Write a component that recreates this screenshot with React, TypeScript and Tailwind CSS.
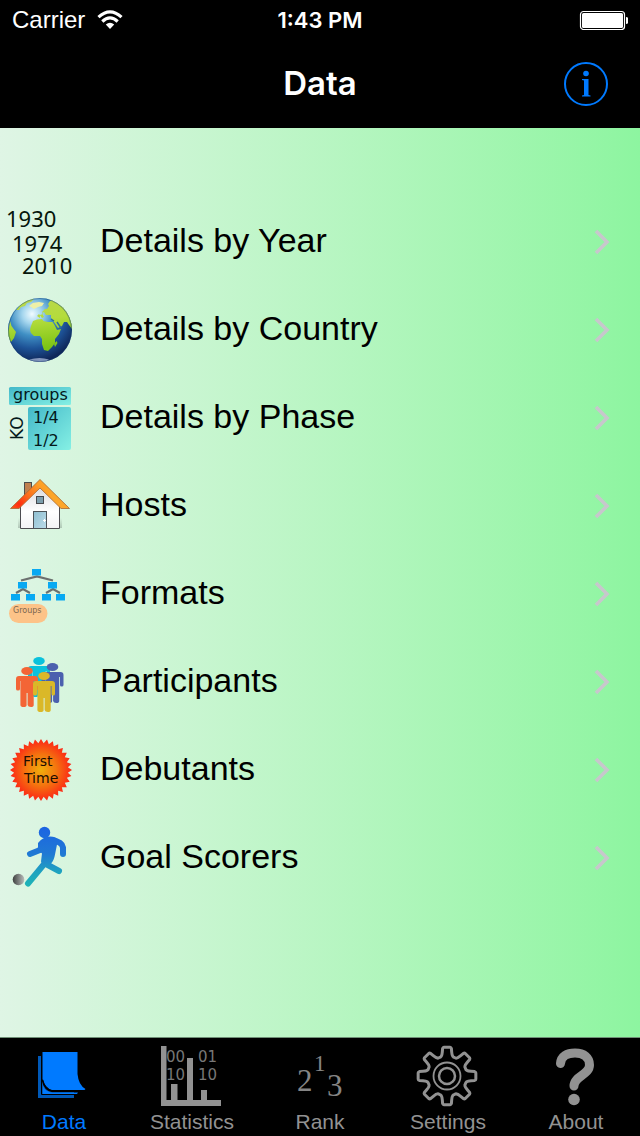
import type { ReactNode } from "react";

const polar = (cx: number, cy: number, r: number, deg: number) => {
  const a = (deg * Math.PI) / 180;
  return `${(cx + r * Math.sin(a)).toFixed(2)} ${(cy - r * Math.cos(a)).toFixed(2)}`;
};

const burst = Array.from({ length: 64 }, (_, i) =>
  polar(41, 46, i % 2 === 0 ? 31 : 27, i * 5.625),
).join(" L");

const gear =
  "M" +
  Array.from({ length: 8 }, (_, i) => {
    const d = i * 45;
    const p = (r: number, a: number) => polar(31, 32, r, d + a);
    return `${p(28, -9)} Q${p(29, -8)} ${p(29, -6)} L${p(29, 6)} Q${p(29, 8)} ${p(28, 9)} L${p(24.5, 11)} C${p(20.5, 14)} ${p(19.5, 18)} ${p(20, 22.5)} C${p(19.5, 27)} ${p(20.5, 31)} ${p(24.5, 34)} L`;
  }).join("") +
  polar(31, 32, 28, -9) +
  "Z";

function RowIcon({ children }: { children: ReactNode }) {
  return (
    <svg viewBox="0 0 80 88" className="h-22 w-20 shrink-0" aria-hidden="true">
      {children}
    </svg>
  );
}

function YearIcon() {
  return (
    <RowIcon>
      <g className="font-['Noto_Sans',sans-serif] text-[22px]" fill="#06160b">
        <text x="6" y="31">1930</text>
        <text x="12" y="56">1974</text>
        <text x="22" y="78">2010</text>
      </g>
    </RowIcon>
  );
}

function GlobeIcon() {
  return (
    <RowIcon>
      <defs>
        <radialGradient id="sea" gradientUnits="userSpaceOnUse" cx="32" cy="30" r="48">
          <stop offset="0" stopColor="#f0fbff" />
          <stop offset="0.2" stopColor="#a5d6ee" />
          <stop offset="0.45" stopColor="#3f8fc4" />
          <stop offset="0.72" stopColor="#1d5296" />
          <stop offset="1" stopColor="#0f2658" />
        </radialGradient>
        <linearGradient id="land" gradientUnits="userSpaceOnUse" x1="40" y1="16" x2="46" y2="64">
          <stop offset="0" stopColor="#b9d84a" />
          <stop offset="0.4" stopColor="#b4dc3c" />
          <stop offset="1" stopColor="#7cc414" />
        </linearGradient>
        <clipPath id="globe">
          <circle cx="40" cy="46" r="32" />
        </clipPath>
      </defs>
      <circle cx="40" cy="46" r="32" fill="url(#sea)" />
      <g clipPath="url(#globe)" fill="url(#land)">
        <path d="M33 37l4-1.500 5-.5 1.500 2 4 1 5 0 2 3 2.500 5 4-1-2 5-4 5 0 4-3 4-4 4-4-1-2-6 0-5-2-3-6 0-3-3-1-3 1-4z" />
        <path d="M40 34l0-3 3-1-1-2 3-3 2 0 2-3-1-2 2-3 5-3 6 3 8 7 4 9 1 8-2 4-3-4-2-3-3 0-2 4-4 2-4-6-3-4 0-3-5 0-2-3-2 1 2 4-2 1-3-4-2 2z" />
        <path d="M29 22l4-3 6-1 5 1-2 3-4 1-4 2-3-2z" fill="#eef0a8" />
        <path d="M16 26l5-6 6-4 7-1-3 3-4 1-2 3-4 1-2 3z" />
        <path d="M10 37l1.500 5 4.500 6-2 6-3 4-4-5z" />
        <path d="M54 60l2.500-3 1 2-2.500 4z" />
        <path d="M29 75.500q11-3 20 0l-4 3H33z" fill="#8497bd" />
      </g>
      <path d="M57 38l4 6M51 35l3 2" fill="none" stroke="#2a6d9c" strokeWidth="1.500" />
      <circle cx="40" cy="46" r="31.500" fill="none" stroke="#123a70" strokeOpacity="0.4" />
    </RowIcon>
  );
}

function PhaseIcon() {
  return (
    <RowIcon>
      <defs>
        <linearGradient id="aqua" x1="0" y1="0" x2="1" y2="1">
          <stop offset="0" stopColor="#43b8c9" />
          <stop offset="1" stopColor="#85f0e4" />
        </linearGradient>
      </defs>
      <rect x="9" y="15" width="62" height="18" rx="1.500" fill="url(#aqua)" />
      <rect x="28" y="35" width="43" height="43" rx="2" fill="url(#aqua)" />
      <g className="font-['DejaVu_Sans',sans-serif] text-[16px]" fill="#04191b">
        <text x="13" y="28">groups</text>
        <text x="33" y="51">1/4</text>
        <text x="33" y="74">1/2</text>
        <text transform="translate(23 68) rotate(-90)" className="text-[17px]">KO</text>
      </g>
    </RowIcon>
  );
}

function HouseIcon() {
  return (
    <RowIcon>
      <defs>
        <radialGradient id="roof" gradientUnits="userSpaceOnUse" cx="19" cy="44" r="34">
          <stop offset="0" stopColor="#ff2a10" />
          <stop offset="0.35" stopColor="#fb6a1c" />
          <stop offset="0.8" stopColor="#fd9d25" />
          <stop offset="1" stopColor="#fca62a" />
        </radialGradient>
        <linearGradient id="wall" x1="0" y1="0" x2="0" y2="1">
          <stop offset="0" stopColor="#d9d9de" />
          <stop offset="0.6" stopColor="#ffffff" />
          <stop offset="1" stopColor="#f3f3f5" />
        </linearGradient>
        <linearGradient id="door" x1="0" y1="0" x2="1" y2="1">
          <stop offset="0" stopColor="#8fbfd0" />
          <stop offset="1" stopColor="#bcdcea" />
        </linearGradient>
        <linearGradient id="shade" x1="0" y1="0" x2="0" y2="1">
          <stop offset="0" stopColor="#7d8f83" stopOpacity="0" />
          <stop offset="1" stopColor="#7d8f83" stopOpacity="0.45" />
        </linearGradient>
      </defs>
      <path d="M18 58h44v10H18z" fill="url(#shade)" />
      <rect x="24.500" y="22.500" width="7" height="16" fill="#c08050" stroke="#4d4d4d" />
      <path d="M20.500 68.500V44L40 26l19.500 18v24.500z" fill="url(#wall)" stroke="#4c4c50" />
      <rect x="36.500" y="36.500" width="7" height="7" fill="#7b9dac" stroke="#45474c" />
      <rect x="33.500" y="51.500" width="13" height="17" fill="url(#door)" stroke="#4c5358" />
      <path d="M44.500 59v3M43 60.500h3" stroke="#fff" />
      <path d="M40 19.500L69.500 48.500H61L40 28 19 48.500H10.500z" fill="url(#roof)" stroke="#a9662f" strokeWidth="0.800" />
    </RowIcon>
  );
}

function FormatsIcon() {
  const boxes = [[32, 21], [18, 34], [48, 34], [11, 46], [26, 46], [42, 46], [56, 46]];
  return (
    <RowIcon>
      <g fill="none" stroke="#6c706f" strokeWidth="2.200">
        <path d="M21 32.500l16-4 16 4" />
        <path d="M16 45l7-4 7 4M46 45l7-4 7 4" />
      </g>
      {boxes.map(([x, y]) => (
        <rect key={`${x}-${y}`} x={x} y={y} width="9" height="6.500" fill="#08a9f2" />
      ))}
      <rect x="9" y="56" width="38.500" height="19" rx="9.500" fill="#fdc388" />
      <text x="13" y="65" className="font-['DejaVu_Sans',sans-serif] text-[8px]" fill="#7b6650">
        Groups
      </text>
    </RowIcon>
  );
}

function Person({ x, y, color }: { x: number; y: number; color: string }) {
  return (
    <g transform={`translate(${x} ${y})`} fill={color}>
      <ellipse cx="11" cy="4" rx="5.800" ry="4" />
      <path d="M3 9h16q3 0 3 3v10q0 1.500-1.800 1.500T18.500 22v-8h-.8v24q0 2-2.800 2t-3.300-2V26h-1v12q0 2-3 2t-3.200-2V14H4v8q0 1.500-2 1.500T0 22V12q0-3 3-3z" />
    </g>
  );
}

function PeopleIcon() {
  return (
    <RowIcon>
      <Person x={28} y={21} color="#0bc1dc" />
      <Person x={41.5} y={27} color="#4b60ae" />
      <Person x={16} y={31} color="#f36536" />
      <Person x={33} y={36} color="#dab828" />
    </RowIcon>
  );
}

function DebutIcon() {
  return (
    <RowIcon>
      <defs>
        <radialGradient id="sun">
          <stop offset="0" stopColor="#efae0c" />
          <stop offset="0.5" stopColor="#f4750f" />
          <stop offset="1" stopColor="#fc2516" />
        </radialGradient>
      </defs>
      <path d={`M${burst}Z`} fill="url(#sun)" />
      <g className="font-['DejaVu_Sans',sans-serif] text-[14px]" fill="#1c0d02">
        <text x="23" y="42">First</text>
        <text x="24" y="59">Time</text>
      </g>
    </RowIcon>
  );
}

function ScorerIcon() {
  return (
    <RowIcon>
      <defs>
        <linearGradient id="kit" gradientUnits="userSpaceOnUse" x1="0" y1="15" x2="0" y2="75">
          <stop offset="0" stopColor="#1c64e2" />
          <stop offset="0.45" stopColor="#2079d4" />
          <stop offset="0.75" stopColor="#1fa3bf" />
          <stop offset="1" stopColor="#1eb5b6" />
        </linearGradient>
        <linearGradient id="ball">
          <stop offset="0" stopColor="#3f4140" />
          <stop offset="1" stopColor="#b9bdbb" />
        </linearGradient>
      </defs>
      <circle cx="44.500" cy="20.500" r="5.700" fill="url(#kit)" />
      <g fill="none" stroke="url(#kit)" strokeWidth="6" strokeLinecap="round" strokeLinejoin="round">
        <path d="M30 42l10-4 3-7M52 28.500q10 1 11 7V42" />
        <path d="M45 51L28 71.500M46 52l13 7" />
      </g>
      <path d="M38 31q5-6.500 12-6.500 6 0 8 3l-3 15q-1 6-4 9l-7 4-3-6 1-8-4-4z" fill="url(#kit)" />
      <circle cx="18.500" cy="67.500" r="5.800" fill="url(#ball)" />
    </RowIcon>
  );
}

const rows = [
  { label: "Details by Year", icon: <YearIcon /> },
  { label: "Details by Country", icon: <GlobeIcon /> },
  { label: "Details by Phase", icon: <PhaseIcon /> },
  { label: "Hosts", icon: <HouseIcon /> },
  { label: "Formats", icon: <FormatsIcon /> },
  { label: "Participants", icon: <PeopleIcon /> },
  { label: "Debutants", icon: <DebutIcon /> },
  { label: "Goal Scorers", icon: <ScorerIcon /> },
];

const tabs = [
  {
    label: "Data",
    icon: (
      <>
        <path d="M6 12h4v24q2 9 12 12h20v6H6z" fill="#0059b8" />
        <path d="M9.500 12v38.500h34" fill="none" stroke="#000" />
        <path d="M10.500 8h35v22q1 11 8 15l-1 1H20q-7-2-9.500-11z" fill="#007aff" />
        <path d="M10.500 36q2 10 10 11.500h26" fill="none" stroke="#000" strokeWidth="1.600" />
        <path d="M11 42q2 5 8 6.500h27l-1 1.500H11z" fill="#007aff" />
      </>
    ),
  },
  {
    label: "Statistics",
    icon: (
      <>
        <path d="M1 2h5.500v54H61v6H1z" fill="#929292" />
        <path d="M11 40h6.500v17H11zM27 14h6v43h-6zM41 46h6v11h-6z" fill="#929292" />
        <g className="font-['DejaVu_Sans',sans-serif] text-[15px]" fill="#777">
          <text x="6" y="18">00</text>
          <text x="6" y="36">10</text>
          <text x="38" y="18">01</text>
          <text x="38" y="36">10</text>
        </g>
      </>
    ),
  },
  {
    label: "Rank",
    icon: (
      <g className="font-['Liberation_Serif',serif]" fill="#858585">
        <text x="9" y="47" className="text-[31px]">2</text>
        <text x="26" y="27" className="text-[23px]">1</text>
        <text x="39" y="52" className="text-[31px]">3</text>
      </g>
    ),
  },
  {
    label: "Settings",
    icon: (
      <g fill="none" stroke="#929292">
        <path d={gear} strokeWidth="3" strokeLinejoin="round" />
        <circle cx="31" cy="32" r="13.500" strokeWidth="1.800" />
        <circle cx="31" cy="32" r="8" strokeWidth="2.500" />
      </g>
    ),
  },
  {
    label: "About",
    icon: (
      <>
        <path d="M16.500 19.500C17 12 23 9 31 9c9 0 14.500 4.500 14.500 12C45.500 31 30 32 30 42" fill="none" stroke="#929292" strokeWidth="9" strokeLinecap="round" />
        <circle cx="30" cy="55.500" r="5.800" fill="#929292" />
      </>
    ),
  },
];

export default function App() {
  return (
    <div className="flex min-h-screen flex-col bg-black font-['Liberation_Sans',Arial,sans-serif]">
      <header className="text-white">
        <div className="grid h-10 grid-cols-3 items-center px-3">
          <div className="flex items-center gap-3 text-2xl">
            <span>Carrier</span>
            <svg viewBox="0 0 26 20" className="h-5 w-[26px]" aria-hidden="true">
              <g fill="none" stroke="#fff" strokeWidth="3.200">
                <path d="M1.500 7.200Q13-3.500 24.500 7.200" />
                <path d="M5.300 11.500Q13 4.300 20.700 11.500" />
              </g>
              <path d="M8.800 14.500Q13 11 17.200 14.500L13 19z" fill="#fff" />
            </svg>
          </div>
          <div className="text-center font-['Inter',sans-serif] text-[22px] font-semibold">1:43 PM</div>
          <svg viewBox="0 0 50 20" className="h-5 w-[50px] justify-self-end" aria-hidden="true">
            <rect x="2.500" y="1.500" width="44" height="18" rx="3" fill="none" stroke="#fff" strokeWidth="1.200" />
            <rect x="4" y="3" width="41" height="15" rx="1.500" fill="#fff" />
            <path d="M48 7q3 .5 3 3.500t-3 3.500z" fill="#fff" />
          </svg>
        </div>
        <div className="grid h-22 grid-cols-[1fr_auto_1fr] items-center px-8">
          <h1 className="col-start-2 font-['Inter',sans-serif] text-[33px] font-semibold">Data</h1>
          <button aria-label="Information" className="justify-self-end text-[#007aff]">
            <svg viewBox="0 0 44 44" className="size-11" aria-hidden="true">
              <circle cx="22" cy="22" r="21" fill="none" stroke="currentColor" strokeWidth="2" />
              <circle cx="22" cy="11.500" r="2.800" fill="currentColor" />
              <path d="M18 17h6.500v16l2 .5V34.500h-8.500v-1l2-.5V18.500L18 18z" fill="currentColor" />
            </svg>
          </button>
        </div>
      </header>

      <main className="grow bg-linear-to-r from-[#dff5e5] to-[#8df5a0] pt-17">
        <ul>
          {rows.map((row) => (
            <li key={row.label}>
              <a href="#" className="flex h-22 items-center pr-7">
                {row.icon}
                <span className="ml-5 grow text-[34px] text-black">{row.label}</span>
                <svg viewBox="0 0 20 28" className="mt-1 h-7 w-5" aria-hidden="true">
                  <path d="M4 3l11 11L4 25" fill="none" stroke="#c7c7cc" strokeWidth="3.600" />
                </svg>
              </a>
            </li>
          ))}
        </ul>
      </main>

      <nav className="grid h-[99px] grid-cols-5 border-t border-[#6f8f76] bg-black pt-[6px]">
        {tabs.map((tab, i) => (
          <button
            key={tab.label}
            aria-current={i === 0 ? "page" : undefined}
            className={`flex flex-col items-center text-[21px] leading-7 ${i === 0 ? "text-[#007aff]" : "text-[#929292]"}`}
          >
            <svg viewBox="0 0 64 64" className="size-16 shrink-0" aria-hidden="true">
              {tab.icon}
            </svg>
            <span>{tab.label}</span>
          </button>
        ))}
      </nav>
    </div>
  );
}
